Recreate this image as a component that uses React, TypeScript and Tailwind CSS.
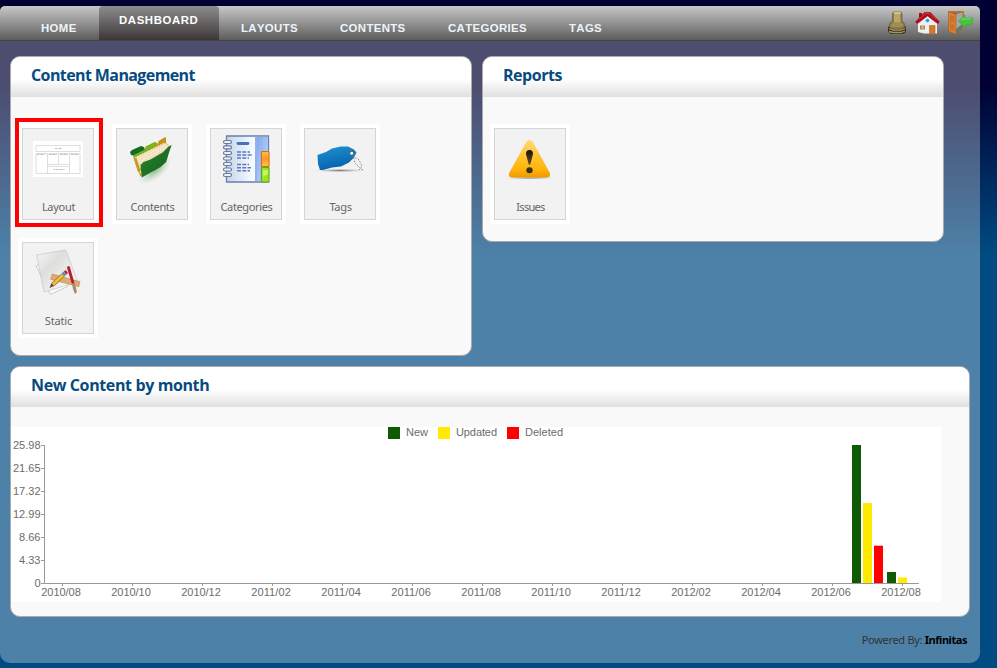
import type { ReactNode } from "react";

const navItems = [
  { label: "LAYOUTS", cls: "w-[99px]" },
  { label: "CONTENTS", cls: "w-[108px]" },
  { label: "CATEGORIES", cls: "w-[121px]" },
  { label: "TAGS", cls: "w-[80px]" },
];

function Panel({ title, titleClass, className, children }: { title: string; titleClass: string; className: string; children: ReactNode }) {
  return (
    <section className={"overflow-hidden rounded-[10px] border border-[#aaa] bg-[#f9f9f9] " + className}>
      <header className="h-10 bg-[linear-gradient(#fff_0%,#fff_56%,#e0e0e0_100%)] pl-5 pt-[6px]">
        <h2 className={"whitespace-nowrap font-['Open_Sans','Noto_Sans',sans-serif] text-[16px] leading-6 font-bold text-[#064b80] " + titleClass}>{title}</h2>
      </header>
      {children}
    </section>
  );
}

function Tile({ label, labelClass, selected, children }: { label: string; labelClass: string; selected?: boolean; children: ReactNode }) {
  return (
    <div className="relative h-[100px] w-20 bg-white p-1">
      <div className="flex h-[92px] w-[72px] flex-col items-center border border-[#d3d5db] bg-[#f2f2f2]">
        <svg width="70" height="66" viewBox="0 0 70 66" className="shrink-0">{children}</svg>
        <span className={"mt-1 whitespace-nowrap pl-px font-['Noto_Sans','Open_Sans',sans-serif] text-[11px] leading-[16px] text-[#666] " + labelClass}>{label}</span>
      </div>
      {selected && <div className="absolute -left-[3px] -top-[6px] h-[109px] w-[88px] border-4 border-[#f00]" />}
    </div>
  );
}

function LayoutArt() {
  return (
    <g>
      <path fill="#fff" d="M10 12h50v36H10z" />
      <path fill="none" stroke="#dedede" d="M13 16.5h44v6H13zM13 24.500h44v20H13zM24.500 24v20M35.500 24v12M46.500 24v20M24.500 35.500h22M24.500 37.500h22" />
      <path stroke="#aaa" strokeWidth=".8" strokeDasharray="2 .5 1 .4" d="M32 19.500h7M14 25.500h8M26 25.500h8M37 25.500h8M48 25.500h8M30.500 40.500h11" />
    </g>
  );
}

function FolderArt() {
  return (
    <g>
      <defs>
        <linearGradient id="folder" x1="0" y1="0" x2="1" y2="1"><stop stopColor="#2c8532" /><stop offset="1" stopColor="#126018" /></linearGradient>
        <radialGradient id="folderShade"><stop stopColor="#72b677" stopOpacity=".9" /><stop offset="1" stopColor="#aad3ac" stopOpacity="0" /></radialGradient>
      </defs>
      <ellipse cx="38" cy="41" rx="20" ry="9" transform="rotate(-38 38 41)" fill="url(#folderShade)" />
      <path fill="#176b26" d="M13 23l2-2 9-4 3 1 1 3-10 6-4-1z" />
      <path fill="#79b51c" d="M16 26.500l12-6 .5-3 9-4.500 3 1v3l6-2v4L18 31z" />
      <path fill="#c99216" d="M17 30l18-11 6-4 .5-3 6-3.500 1.500-.2v6l3 2-28 25-3 2z" />
      <path fill="#eee0bd" d="M19 28l29-14 5 3-30 23z" />
      <path fill="none" stroke="#fffbf0" strokeDasharray="1 1" d="M18 29l29-15M20 31l29-15M22 33l28-15" />
      <path fill="none" stroke="#d19a22" strokeWidth="1.500" d="M17 28l3 9 4 10" />
      <path fill="url(#folder)" d="M23.500 36l3-3 7-2.500 12-7 6-6 3.200-1.500-2.500 7-3 10-5.500 5-19 10.500z" />
    </g>
  );
}

function NotebookArt() {
  return (
    <g>
      <defs>
        <linearGradient id="page"><stop stopColor="#c5d4ea" /><stop offset=".6" stopColor="#f5f9ff" /><stop offset="1" stopColor="#fff" /></linearGradient>
        <linearGradient id="orange" x1="0" x2="0" y1="0" y2="1"><stop stopColor="#ffbd4b" /><stop offset=".5" stopColor="#ff991a" /><stop offset="1" stopColor="#ffc254" /></linearGradient>
        <linearGradient id="blueTab" y2="1"><stop stopColor="#83a9ec" /><stop offset="1" stopColor="#c7dafa" /></linearGradient>
      </defs>
      <path fill="url(#page)" stroke="#6681ad" strokeWidth="1.300" d="M15.500 7h42v46h-42z" />
      <path fill="#8eb2f2" d="M44 8h7v44h-7z" />
      <path fill="url(#blueTab)" d="M46 8h11v14h-7l-1 30h-3z" />
      <path fill="url(#orange)" stroke="#d66c14" d="M50.500 22.500h7.500v15h-7.500z" />
      <path fill="#97e51b" stroke="#65a916" d="M50.500 38.500h7.500v14.500h-7.500z" />
      <path fill="#c5f65f" d="M52 41h5v4l-5 3z" />
      <path stroke="#4773bd" strokeWidth="2.800" strokeLinecap="round" d="M27 14.500h10" />
      <path stroke="#5b78ba" strokeWidth="1.500" strokeDasharray="4 1.300" d="M26 23h13M26 26h15M26 29h12M26 35.500h12M26 38.700h14M26 41.700h13" />
      {[13, 18.4, 24, 29.5, 35, 40.5, 46].map((y) => (
        <rect key={y} x="12.500" y={y - 1.500} width="8" height="3" rx="1.500" fill="#eef1f8" stroke="#697b9e" strokeWidth="1.200" />
      ))}
    </g>
  );
}

function TagArt() {
  return (
    <g>
      <defs>
        <linearGradient id="tag" x2=".3" y2="1"><stop stopColor="#1f93d0" /><stop offset="1" stopColor="#0762ae" /></linearGradient>
        <radialGradient id="tagShade"><stop stopColor="#777" /><stop offset="1" stopColor="#bbb" stopOpacity="0" /></radialGradient>
      </defs>
      <ellipse cx="35" cy="41.500" rx="26" ry="1.800" fill="url(#tagShade)" />
      <path fill="url(#tag)" d="M12.500 26l8.500-3 6-3.500 9-2h7l6 3 2.500 3-2.500 5-5 5-8 4-9 1-9 2.500h-3l-2-6z" />
      <circle cx="46.700" cy="24.300" r="2" fill="#fff" stroke="#495561" />
      <path fill="none" stroke="#777" strokeWidth=".9" strokeDasharray="1.500 1.400" d="M48 26l2 8 6 6 2 1M48 27l6 4 3 6-3 4" />
    </g>
  );
}

function WarningArt() {
  return (
    <g>
      <defs>
        <linearGradient id="warning" x1="0" x2="0" y1="0" y2="1"><stop stopColor="#ffdb73" /><stop offset=".45" stopColor="#ffc32f" /><stop offset=".8" stopColor="#ffb20a" /><stop offset="1" stopColor="#ee9700" /></linearGradient>
        <linearGradient id="mark" x2="0" y2="1"><stop stopColor="#111" /><stop offset="1" stopColor="#6a531f" /></linearGradient>
        <radialGradient id="warnShade"><stop stopColor="#777" /><stop offset="1" stopColor="#bbb" stopOpacity="0" /></radialGradient>
      </defs>
      <ellipse cx="35" cy="49" rx="26" ry="1.400" fill="url(#warnShade)" />
      <path fill="url(#warning)" d="M31.500 12.500Q34.500 9.500 37.500 12.500L54.600 43.500Q56.500 48.500 51.500 48.500H17.500Q12.500 48.500 14.400 43.500Z" />
      <path fill="url(#mark)" d="M31 25q0-4 3.500-4t3.500 4l-2.300 9q-.4 2-1.200 2t-1.200-2z" />
      <ellipse cx="34.500" cy="41.300" rx="3.200" ry="3" fill="#35301f" />
    </g>
  );
}

function StaticArt() {
  return (
    <g>
      <defs>
        <linearGradient id="paper" x2="1" y2="1"><stop stopColor="#f7f7f6" /><stop offset=".35" stopColor="#dededd" /><stop offset="1" stopColor="#fff" /></linearGradient>
      </defs>
      <path fill="#fafafa" stroke="#b9b9b9" strokeWidth=".7" d="M13 23l14.500 28.500 17-8-14-29z" />
      <path fill="url(#paper)" stroke="#c4c4c4" strokeWidth=".7" d="M13.700 12L42.700 7l12 32L21 49z" />
      <path fill="#e0aa76" stroke="#bd8150" strokeWidth=".6" d="M29.300 31L57 38.700l-1.300 5-28-7.400z" />
      <path stroke="#936c19" strokeWidth="4.200" d="M30 41.500l10-9.500" />
      <path stroke="#f1be36" strokeWidth="3" d="M30 41.500l10-9.500" />
      <path stroke="#5b91bc" strokeWidth="4" d="M40 32l2-2" />
      <path stroke="#bf2637" strokeWidth="4" d="M42 30l2-1.500" />
      <path fill="#68412d" d="M28.500 40l-2 5 4.500-2z" />
      <path fill="#a78b6b" d="M48.500 38l2.500-1 3 12-2 2-2-5z" />
      <path stroke="#b31f2d" strokeWidth="2.800" strokeLinecap="round" d="M45.500 24.500l4.200 14.500" />
    </g>
  );
}

const yTicks = ["25.98", "21.65", "17.32", "12.99", "8.66", "4.33", "0"];
const xTicks = ["2010/08", "2010/10", "2010/12", "2011/02", "2011/04", "2011/06", "2011/08", "2011/10", "2011/12", "2012/02", "2012/04", "2012/06", "2012/08"];
const bars = [
  { x: 841, y: 18, h: 138, fill: "#0e5a05" },
  { x: 852, y: 76, h: 80, fill: "#ffea00" },
  { x: 863, y: 118.7, h: 37.3, fill: "#f00" },
  { x: 876, y: 145, h: 11, fill: "#0e5a05" },
  { x: 887, y: 150.5, h: 5.5, fill: "#ffea00" },
];
const legend = [
  { x: 377, label: "New", fill: "#0e5a05", w: 22 },
  { x: 427, label: "Updated", fill: "#ffea00", w: 41 },
  { x: 496, label: "Deleted", fill: "#f00", w: 38 },
];

function Chart() {
  return (
    <svg width="930" height="175" viewBox="0 0 930 175" className="mt-5 block bg-white font-['Liberation_Sans',Arial,sans-serif] text-[11px]">
      {legend.map((l) => (
        <g key={l.label}>
          <rect x={l.x} y="0" width="12" height="12" fill={l.fill} />
          <text x={l.x + 18} y="9" fill="#6c6c6c" textLength={l.w}>{l.label}</text>
        </g>
      ))}
      <path fill="none" stroke="#999" d="M33.500 18v138.500M30 156.500h878" />
      {yTicks.map((t, i) => (
        <g key={t}>
          <path stroke="#999" d={`M30 ${18.5 + i * 23}h4`} />
          <text x="29.500" y={22 + i * 23} textAnchor="end" fill="#6c6c6c">{t}</text>
        </g>
      ))}
      {xTicks.map((t, i) => (
        <g key={t}>
          <path stroke="#999" d={`M${51.5 + i * 70} 156v3`} />
          <text x={50 + i * 70} y="169" textAnchor="middle" textLength="39.500" fill="#6c6c6c">{t}</text>
        </g>
      ))}
      {bars.map((b) => <rect key={b.x} x={b.x} y={b.y} width="9" height={b.h} fill={b.fill} />)}
    </svg>
  );
}

function AccountIcon() {
  return (
    <svg width="20" height="24" viewBox="0 0 20 24">
      <path fill="#3a3421" d="M1 16l4-3h10l4 3v5l-3 2H4l-3-2z" />
      <path fill="#8d7a47" stroke="#5c5030" strokeWidth=".6" d="M5.500 2l1.500-1h7l1 1v8l2 2 1 4-3 2H5l-3-2 1-4 2.500-2z" />
      <path fill="#b9a567" d="M7 2.500h6.500v9H7z" />
      <path fill="#d3c388" d="M6 2l2-1h5l1.500 1-1 1H7z" />
      <path fill="#a28e55" d="M4 13l3-1h7l2 1v2l-3 1H6l-2-1z" />
      <path stroke="#a8935a" strokeWidth="1.300" d="M2 17.500l4 1.500h8l4-1.500M2 20.500l4 1h8l4-1.500" fill="none" />
    </svg>
  );
}

function HomeIcon() {
  return (
    <svg width="25" height="24" viewBox="0 0 25 24">
      <path fill="#efefeb" d="M3 11l9.500-8 9.500 8v11.500H9L3 21z" />
      <path fill="#a90e18" d="M4 2h3v7H4z" />
      <path fill="#b60c19" stroke="#850b13" strokeWidth=".5" d="M.5 11L9.500 1.500h6L24.500 11l-2 1.500-10-7.500-10 7.500z" />
      <path stroke="#d8434b" strokeWidth=".8" d="M4 8l6.500-5.500h4L21 8" fill="none" />
      <circle cx="12.500" cy="9.500" r="1.800" fill="#249bda" stroke="#82c7e8" strokeWidth=".5" />
      <path fill="#d9792b" stroke="#b56227" strokeWidth=".6" d="M14.500 14.500h5.500v8h-5.500z" />
      <path fill="#a5875a" d="M5 14.500h5v4H5z" />
      <path fill="#d9cb9a" d="M6.500 15.500h2v2h-2z" />
    </svg>
  );
}

function ExitIcon() {
  return (
    <svg width="25" height="24" viewBox="0 0 25 24">
      <path fill="#c96f2a" d="M0 0h16v18h-3L7 23z" />
      <path fill="#6f7472" d="M3 1.500h11.500v17L8 22.500z" />
      <path fill="#a3a8a5" d="M8 3l6.500-1.500v11L8 18z" />
      <path fill="#d98237" stroke="#a9561f" strokeWidth=".6" d="M.5.500L8 3.500v20L.500 20z" />
      <path fill="#cb7229" d="M2 4l4.500 1.500v6.500L2 10.500zM2 12l4.500 1.500v7L2 18.500z" />
      <path fill="#44c43e" stroke="#37a436" strokeWidth=".5" d="M10.500 10l6.500-6v3.500l7.500-1v6.500l-7.500 1v3z" />
      <path stroke="#7be074" strokeWidth=".8" d="M13 9.500l3-2.500v1.500l7.500-1" fill="none" />
    </svg>
  );
}

export default function App() {
  return (
    <div className="h-[668px] w-[997px] overflow-hidden bg-[linear-gradient(#000033_0px,#000033_85px,#004b82_255px,#004b82_100%)] pt-[6px]">
      <div className="h-[657px] w-[980px] overflow-hidden rounded-[10px] rounded-t-[5px] bg-white/30">
        <nav className="flex h-[35px] border-b border-[#444] bg-[linear-gradient(#c8c8c8,#5c5c5c)] font-['Liberation_Sans',Arial,sans-serif] text-[11.4px] leading-[14px] font-bold tracking-[0.36px] text-[#edf4f9] [font-kerning:none]">
          <div className="w-[99px] shrink-0 pl-[41px] pt-[15px]">HOME</div>
          <div className="h-[34px] w-[120px] shrink-0 rounded-t-[4px] bg-[linear-gradient(#8d8d8d,#3d3637)] pl-5 pt-[7px] tracking-[0.6px] text-white">DASHBOARD</div>
          {navItems.map((n) => <div key={n.label} className={"shrink-0 pl-[22px] pt-[15px] " + n.cls}>{n.label}</div>)}
          <div className="ml-auto flex gap-[8px] pr-[7px] pt-[5px]">
            <AccountIcon />
            <HomeIcon />
            <ExitIcon />
          </div>
        </nav>
        <main className="px-[10px] pt-[15px]">
          <div className="flex h-[310px] items-start gap-[10px]">
            <Panel title="Content Management" titleClass="tracking-[-0.6px]" className="h-[300px] w-[462px]">
              <div className="flex flex-wrap gap-x-[14px] gap-y-[14px] pl-[7px] pt-[27px]">
                <Tile label="Layout" labelClass="tracking-[-0.3px]" selected><LayoutArt /></Tile>
                <Tile label="Contents" labelClass="tracking-[-0.35px]"><FolderArt /></Tile>
                <Tile label="Categories" labelClass="tracking-[-0.35px]"><NotebookArt /></Tile>
                <Tile label="Tags" labelClass="tracking-[-0.3px]"><TagArt /></Tile>
                <Tile label="Static" labelClass="tracking-[-0.15px]"><StaticArt /></Tile>
              </div>
            </Panel>
            <Panel title="Reports" titleClass="tracking-[-0.45px]" className="h-[186px] w-[462px]">
              <div className="pl-[7px] pt-[27px]">
                <Tile label="Issues" labelClass="tracking-[-0.7px]"><WarningArt /></Tile>
              </div>
            </Panel>
          </div>
          <Panel title="New Content by month" titleClass="tracking-[-0.38px]" className="h-[251px] w-[960px]">
            <Chart />
          </Panel>
        </main>
        <footer className="pr-[13px] pt-[15px] text-right font-['Noto_Sans','Open_Sans',sans-serif] text-[11px] leading-4 tracking-[-0.3px] text-[#333]">
          Powered By: <b className="tracking-[-0.45px] text-black">Infinitas</b>
        </footer>
      </div>
    </div>
  );
}
